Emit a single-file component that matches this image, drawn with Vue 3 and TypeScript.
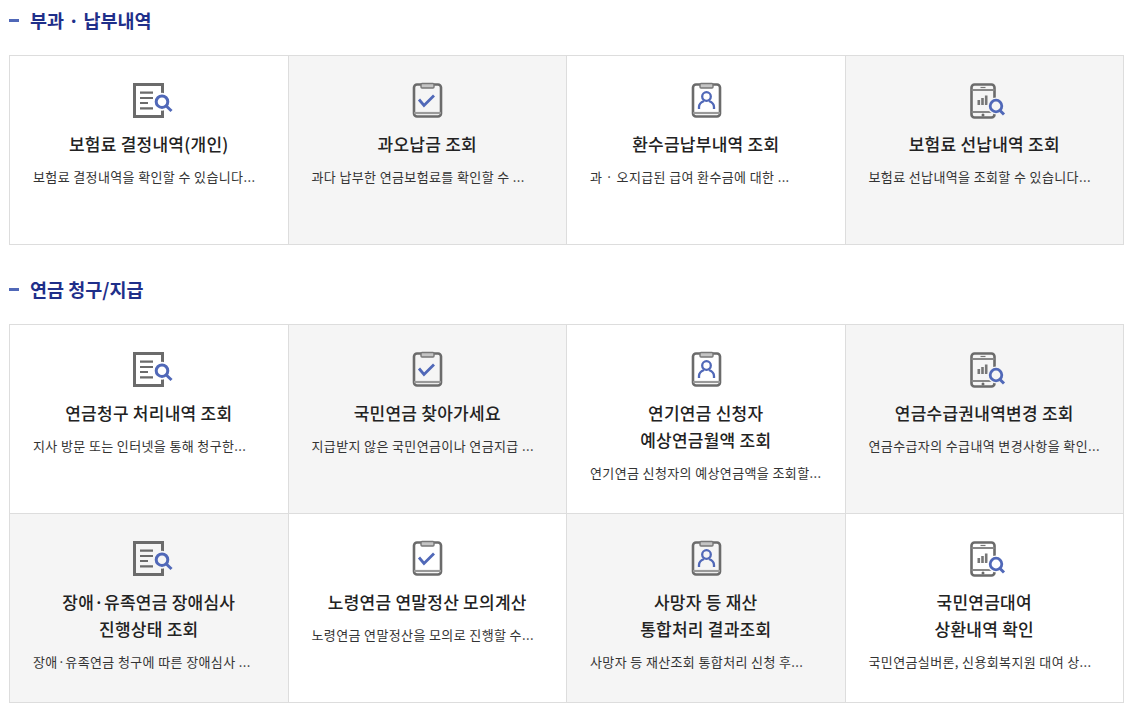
<script setup lang="ts">
interface Card {
  icon: 'doc' | 'check' | 'person' | 'phone'
  lines: string[]
  desc: string
  shaded: boolean
}
interface Section {
  title: string
  cards: Card[]
}
const sections: Section[] = [
  {
    title: '부과 · 납부내역',
    cards: [
      { icon: 'doc', lines: ['보험료 결정내역(개인)'], desc: '보험료 결정내역을 확인할 수 있습니다...', shaded: false },
      { icon: 'check', lines: ['과오납금 조회'], desc: '과다 납부한 연금보험료를 확인할 수 ...', shaded: true },
      { icon: 'person', lines: ['환수금납부내역 조회'], desc: '과 · 오지급된 급여 환수금에 대한 ...', shaded: false },
      { icon: 'phone', lines: ['보험료 선납내역 조회'], desc: '보험료 선납내역을 조회할 수 있습니다...', shaded: true },
    ],
  },
  {
    title: '연금 청구/지급',
    cards: [
      { icon: 'doc', lines: ['연금청구 처리내역 조회'], desc: '지사 방문 또는 인터넷을 통해 청구한...', shaded: false },
      { icon: 'check', lines: ['국민연금 찾아가세요'], desc: '지급받지 않은 국민연금이나 연금지급 ...', shaded: true },
      { icon: 'person', lines: ['연기연금 신청자', '예상연금월액 조회'], desc: '연기연금 신청자의 예상연금액을 조회할...', shaded: false },
      { icon: 'phone', lines: ['연금수급권내역변경 조회'], desc: '연금수급자의 수급내역 변경사항을 확인...', shaded: true },
      { icon: 'doc', lines: ['장애·유족연금 장애심사', '진행상태 조회'], desc: '장애·유족연금 청구에 따른 장애심사 ...', shaded: true },
      { icon: 'check', lines: ['노령연금 연말정산 모의계산'], desc: '노령연금 연말정산을 모의로 진행할 수...', shaded: false },
      { icon: 'person', lines: ['사망자 등 재산', '통합처리 결과조회'], desc: '사망자 등 재산조회 통합처리 신청 후...', shaded: true },
      { icon: 'phone', lines: ['국민연금대여', '상환내역 확인'], desc: '국민연금실버론, 신용회복지원 대여 상...', shaded: false },
    ],
  },
]
</script>

<template>
  <main class="page">
    <section v-for="s in sections" :key="s.title" class="section">
      <h2 class="heading"><span class="dash"></span>{{ s.title }}</h2>
      <ul class="grid">
        <li v-for="c in s.cards" :key="c.desc" class="card" :class="{ shaded: c.shaded }">
          <svg class="icon" width="50" height="42" viewBox="0 0 50 42" fill="none" aria-hidden="true">
            <template v-if="c.icon === 'doc'">
              <rect x="10.500" y="4.500" width="28" height="32" stroke="#6b6b6b" stroke-width="3" />
              <path d="M16 12.700h13M16 18h13M16 23h8M16 28.300h13" stroke="#6b6b6b" stroke-width="2.200" />
              <circle class="halo" cx="38" cy="21.700" r="9" />
              <circle class="halo" cx="38" cy="21.700" r="5.800" stroke="#5068b8" stroke-width="3" />
              <path d="M42.300 26l5.200 5" stroke="#5068b8" stroke-width="3" />
            </template>
            <template v-else-if="c.icon === 'check'">
              <rect x="12" y="4.500" width="27" height="32" rx="3" stroke="#6b6b6b" stroke-width="2.600" />
              <path d="M12 33h27" stroke="#999" stroke-width="2.200" />
              <rect x="19" y="3.500" width="13" height="4.500" rx="1" fill="#c4c4c4" stroke="#777" stroke-width="1.400" />
              <path d="M17 19.500l5 6 10-10" stroke="#5068b8" stroke-width="2.800" />
            </template>
            <template v-else-if="c.icon === 'person'">
              <rect x="12" y="4.500" width="27" height="32" rx="3" stroke="#6b6b6b" stroke-width="2.600" />
              <path d="M12 33h27" stroke="#999" stroke-width="2.200" />
              <rect x="19" y="3.500" width="13" height="4.500" rx="1" fill="#c4c4c4" stroke="#777" stroke-width="1.400" />
              <circle cx="25.500" cy="16.500" r="4.300" stroke="#5068b8" stroke-width="2.300" />
              <path d="M18 29v-2c0-3 2.500-5 5-6M33 29v-2c0-3-2.500-5-5-6" stroke="#5068b8" stroke-width="2.300" />
            </template>
            <template v-else>
              <rect x="12.500" y="4.500" width="23" height="33" rx="3" stroke="#6b6b6b" stroke-width="2.600" />
              <path d="M12.500 10h23M12.500 32h23" stroke="#888" stroke-width="1.800" />
              <path d="M21.500 7.500h5" stroke="#777" stroke-width="1.200" />
              <circle cx="24" cy="35" r="1.500" fill="#6b6b6b" />
              <path d="M18.500 20v5h2.600v-5zM22.200 18v7h2.600v-7zM25.900 15.500v9.500h2.600v-9.500z" fill="#777" />
              <circle class="halo" cx="37" cy="26" r="8.500" />
              <circle class="halo" cx="37" cy="26" r="5.800" stroke="#5068b8" stroke-width="2.800" />
              <path d="M41 30.500l4 4" stroke="#5068b8" stroke-width="3" />
            </template>
          </svg>
          <h3 class="title"><span v-for="l in c.lines" :key="l" class="line">{{ l }}</span></h3>
          <p class="desc">{{ c.desc }}</p>
        </li>
      </ul>
    </section>
  </main>
</template>

<style>
html, body { margin: 0; background: #fff; }
</style>

<style scoped>
.page {
  width: 1115px;
  margin-left: 9px;
  font-family: "Noto Sans CJK KR", "Noto Sans", sans-serif;
  color: #222;
}
.section { margin-bottom: 24px; }
.heading {
  display: flex;
  align-items: center;
  gap: 11px;
  height: 40px;
  margin: 0 0 15px;
  font-size: 18.500px;
  font-weight: 700;
  color: #1f2f8a;
}
.dash { width: 10px; height: 3px; background: #5068b8; }
.grid {
  display: grid;
  grid-template-columns: repeat(4, minmax(0, 1fr));
  grid-auto-rows: 189px;
  margin: 0;
  padding: 0;
  list-style: none;
  border-top: 1px solid #ddd;
  border-left: 1px solid #ddd;
}
.card {
  display: flex;
  flex-direction: column;
  align-items: center;
  padding: 24px 23px 0;
  border-right: 1px solid #ddd;
  border-bottom: 1px solid #ddd;
  background: #fff;
}
.card.shaded { background: #f5f5f5; }
.halo { fill: #fff; }
.shaded .halo { fill: #f5f5f5; }
.icon { flex: none; }
.title {
  margin: 8px 0 0;
  font-size: 17px;
  font-weight: 500;
  line-height: 27px;
  letter-spacing: 0.250px;
  text-align: center;
  color: #222;
}
.line { display: block; }
.desc {
  align-self: flex-start;
  margin: 11px 0 0;
  font-size: 13px;
  line-height: 18px;
  letter-spacing: 0.370px;
  white-space: nowrap;
  color: #333;
}
</style>
